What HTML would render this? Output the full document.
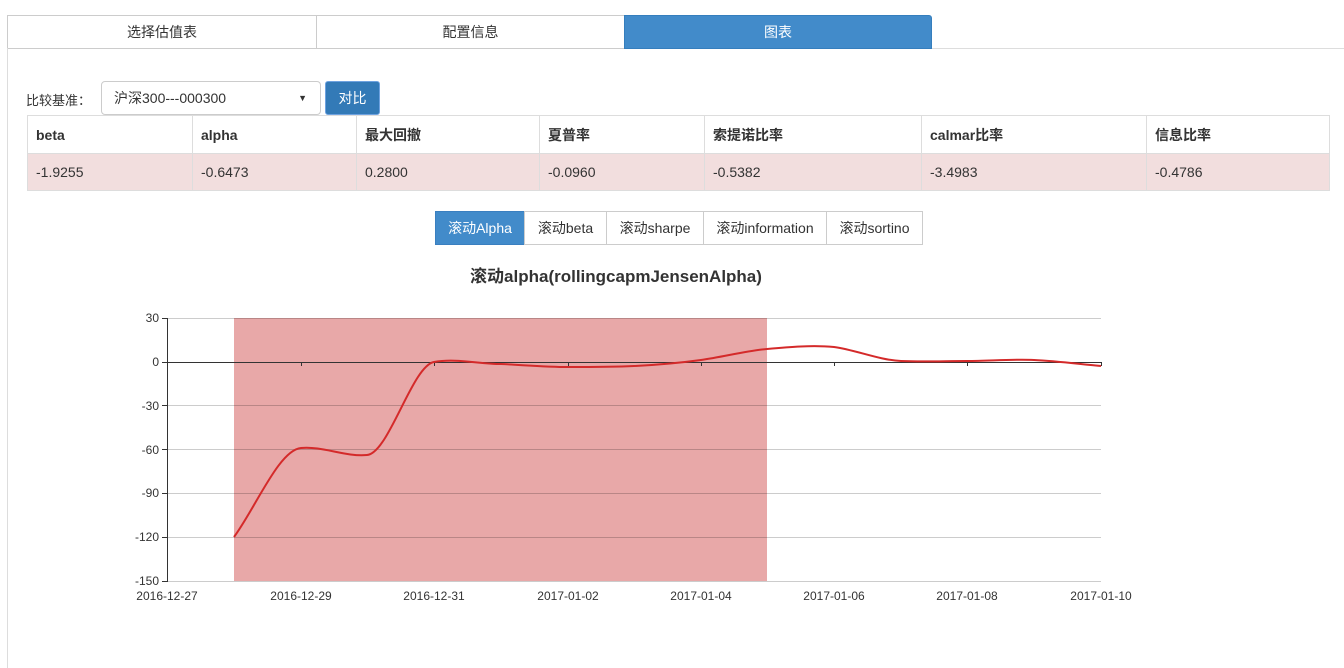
<!DOCTYPE html>
<html><head><meta charset="utf-8"><style>
*{box-sizing:border-box;margin:0;padding:0}
body{width:1344px;height:664px;background:#fff;font-family:"Liberation Sans","Noto Sans CJK SC",sans-serif;font-size:14px;color:#333;position:relative;overflow:hidden}
.abs{position:absolute}
.tab{position:absolute;top:15px;height:34px;border:1px solid #ccc;text-align:center;line-height:32px;font-size:14px;background:#fff}
table{border-collapse:collapse;position:absolute;left:27px;top:115px;width:1303px}
td{border:1px solid #ddd;padding:0 8px;font-size:14px}
.h td{height:38px;font-weight:bold}
.r td{height:37px;background:#f2dede}
.bg{position:absolute;top:211px;height:34px;border:1px solid #ccc;line-height:32px;text-align:center;font-size:14px;color:#333}
</style></head><body>
<div class="tab" style="left:7px;width:310px">选择估值表</div>
<div class="tab" style="left:316px;width:309px">配置信息</div>
<div class="tab" style="left:624px;width:308px;background:#428bca;color:#fff;border-color:#357ebd;border-radius:0 3px 0 0">图表</div>
<div class="abs" style="left:932px;top:48px;width:412px;height:1px;background:#ddd"></div>
<div class="abs" style="left:7px;top:48px;width:1px;height:620px;background:#ddd"></div>
<div class="abs" style="left:26px;top:90px;font-size:13px">比较基准：</div>
<div class="abs" style="left:101px;top:81px;width:220px;height:34px;border:1px solid #ccc;border-radius:4px;padding-left:12px;line-height:32px;font-size:14px">沪深300---000300<span style="position:absolute;right:13px;top:0;font-size:9px">▼</span></div>
<div class="abs" style="left:325px;top:81px;width:55px;height:34px;background:#337ab7;border:1px solid #6ea2e0;border-radius:3px;color:#fff;text-align:center;line-height:32px;font-size:14px">对比</div>
<table>
<tr class="h"><td style="width:165px">beta</td><td style="width:164px">alpha</td><td style="width:183px">最大回撤</td><td style="width:165px">夏普率</td><td style="width:217px">索提诺比率</td><td style="width:225px">calmar比率</td><td>信息比率</td></tr>
<tr class="r"><td>-1.9255</td><td>-0.6473</td><td>0.2800</td><td>-0.0960</td><td>-0.5382</td><td>-3.4983</td><td>-0.4786</td></tr>
</table>
<div class="bg" style="left:435px;width:90px;background:#428bca;color:#fff;border-color:#3a7fc0">滚动Alpha</div>
<div class="bg" style="left:524px;width:83px">滚动beta</div>
<div class="bg" style="left:606px;width:98px">滚动sharpe</div>
<div class="bg" style="left:703px;width:124px">滚动information</div>
<div class="bg" style="left:826px;width:97px">滚动sortino</div>
<div class="abs" style="left:0;width:1232px;top:262px;text-align:center;font-weight:bold;font-size:17px">滚动alpha(rollingcapmJensenAlpha)</div>
<svg class="abs" style="left:0;top:0" width="1344" height="664">
<rect x="234" y="318" width="533" height="263" fill="#e8a8a8"/>
<g stroke="#000" stroke-opacity="0.2" stroke-width="1">
<line x1="167" y1="318.5" x2="1101" y2="318.5"/><line x1="167" y1="405.5" x2="1101" y2="405.5"/><line x1="167" y1="449.5" x2="1101" y2="449.5"/><line x1="167" y1="493.5" x2="1101" y2="493.5"/><line x1="167" y1="537.5" x2="1101" y2="537.5"/><line x1="167" y1="581.5" x2="1101" y2="581.5"/>
</g>
<g stroke="#333" stroke-width="1">
<line x1="167.5" y1="318" x2="167.5" y2="582"/>
<line x1="167" y1="362.5" x2="1101" y2="362.5"/>
<line x1="301.5" y1="362" x2="301.5" y2="366"/><line x1="434.5" y1="362" x2="434.5" y2="366"/><line x1="568.5" y1="362" x2="568.5" y2="366"/><line x1="701.5" y1="362" x2="701.5" y2="366"/><line x1="834.5" y1="362" x2="834.5" y2="366"/><line x1="967.5" y1="362" x2="967.5" y2="366"/><line x1="1101.5" y1="362" x2="1101.5" y2="366"/>
<line x1="162" y1="318.5" x2="167" y2="318.5"/><line x1="162" y1="362.5" x2="167" y2="362.5"/><line x1="162" y1="405.5" x2="167" y2="405.5"/><line x1="162" y1="449.5" x2="167" y2="449.5"/><line x1="162" y1="493.5" x2="167" y2="493.5"/><line x1="162" y1="537.5" x2="167" y2="537.5"/><line x1="162" y1="581.5" x2="167" y2="581.5"/>
</g>
<path fill="none" stroke="#d42a2a" stroke-width="2" d="M234,537 C256,507 279,450 301,448 C323,446 345,457 367,455 C389,453 412,366 434,362 C456,358 479,364 501,364 C523,365 546,367 568,367 C590,367 612,367 634,366 C656,365 679,363 701,360 C723,357 745,351 767,349 C789,347 812,345 834,347 C856,350 879,360 901,361 C923,362 945,361 967,361 C989,361 1012,359 1034,360 C1056,361 1079,364 1101,366"/>
<g font-family="Liberation Sans, sans-serif" font-size="12" fill="#333" text-anchor="end">
<text x="159" y="322">30</text><text x="159" y="366">0</text><text x="159" y="410">-30</text><text x="159" y="454">-60</text><text x="159" y="497">-90</text><text x="159" y="541">-120</text><text x="159" y="585">-150</text>
</g>
<g font-family="Liberation Sans, sans-serif" font-size="12" fill="#333" text-anchor="middle">
<text x="167" y="600">2016-12-27</text><text x="301" y="600">2016-12-29</text><text x="434" y="600">2016-12-31</text><text x="568" y="600">2017-01-02</text><text x="701" y="600">2017-01-04</text><text x="834" y="600">2017-01-06</text><text x="967" y="600">2017-01-08</text><text x="1101" y="600">2017-01-10</text>
</g>
</svg>
</body></html>
